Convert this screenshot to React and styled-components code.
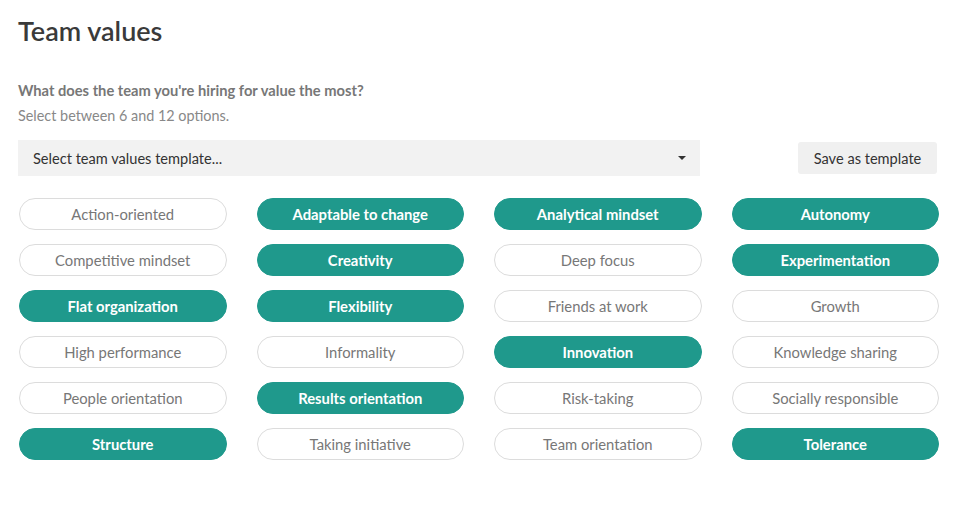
import React from "react";
import styled, { createGlobalStyle } from "styled-components";

const GlobalStyle = createGlobalStyle`
  body {
    margin: 0;
    background: #fff;
    font-family: Lato, "Open Sans", sans-serif;
    color: #333;
  }
`;

const values = [
  ["Action-oriented", false],
  ["Adaptable to change", true],
  ["Analytical mindset", true],
  ["Autonomy", true],
  ["Competitive mindset", false],
  ["Creativity", true],
  ["Deep focus", false],
  ["Experimentation", true],
  ["Flat organization", true],
  ["Flexibility", true],
  ["Friends at work", false],
  ["Growth", false],
  ["High performance", false],
  ["Informality", false],
  ["Innovation", true],
  ["Knowledge sharing", false],
  ["People orientation", false],
  ["Results orientation", true],
  ["Risk-taking", false],
  ["Socially responsible", false],
  ["Structure", true],
  ["Taking initiative", false],
  ["Team orientation", false],
  ["Tolerance", true],
];

export default function App() {
  return (
    <>
      <GlobalStyle />
      <Page>
        <Title>Team values</Title>
        <Question>What does the team you're hiring for value the most?</Question>
        <Hint>Select between 6 and 12 options.</Hint>
        <Toolbar>
          <Select>
            <span>Select team values template...</span>
            <Caret />
          </Select>
          <SaveButton>Save as template</SaveButton>
        </Toolbar>
        <Grid>
          {values.map(([label, selected]) => (
            <Chip key={label} $selected={selected}>
              {label}
            </Chip>
          ))}
        </Grid>
      </Page>
    </>
  );
}

const Page = styled.div`
  padding: 15px 24px 0 18px;
`;

const Title = styled.h1`
  margin: 0;
  font-size: 27px;
  font-weight: 600;
  line-height: 32px;
  color: #3a3a3a;
`;

const Question = styled.div`
  margin-top: 33px;
  font-size: 14.7px;
  font-weight: 700;
  color: #777;
  line-height: 20px;
`;

const Hint = styled.div`
  margin-top: 6px;
  font-size: 14.4px;
  color: #888;
  line-height: 20px;
`;

const Toolbar = styled.div`
  margin-top: 14px;
  display: flex;
  align-items: center;
  justify-content: space-between;
`;

const Select = styled.div`
  width: 682px;
  height: 36px;
  box-sizing: border-box;
  padding: 0 14px 0 15px;
  background: #f2f2f2;
  display: flex;
  align-items: center;
  justify-content: space-between;
  font-size: 14.6px;
  color: #333;
`;

const Caret = styled.span`
  width: 0;
  height: 0;
  border-left: 4px solid transparent;
  border-right: 4px solid transparent;
  border-top: 4px solid #333;
`;

const SaveButton = styled.button`
  height: 32px;
  width: 139px;
  padding: 0;
  border: none;
  border-radius: 3px;
  background: #f0f0f0;
  font-family: inherit;
  font-size: 14.6px;
  color: #333;
`;

const Grid = styled.div`
  margin: 22px -2px 0 1px;
  display: grid;
  grid-template-columns: repeat(4, 1fr);
  column-gap: 30px;
  row-gap: 14px;
`;

const Chip = styled.div`
  height: 32px;
  box-sizing: border-box;
  border-radius: 16px;
  display: flex;
  align-items: center;
  justify-content: center;
  font-size: 14.8px;
  font-weight: ${(p) => (p.$selected ? 700 : 400)};
  color: ${(p) => (p.$selected ? "#fff" : "#777")};
  background: ${(p) => (p.$selected ? "#1f998c" : "#fff")};
  border: 1px solid ${(p) => (p.$selected ? "#1f998c" : "#dcdcdc")};
`;
